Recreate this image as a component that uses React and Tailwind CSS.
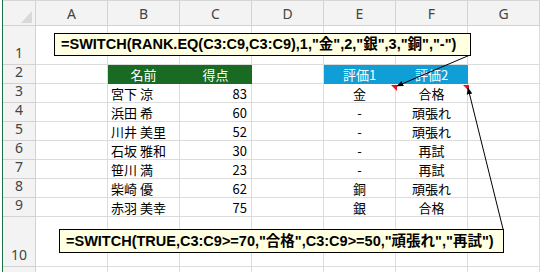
const COLS = ["A", "B", "C", "D", "E", "F", "G"];

const SCORES = [
  ["宮下 涼", 83, "金", "合格"],
  ["浜田 希", 60, "-", "頑張れ"],
  ["川井 美里", 52, "-", "頑張れ"],
  ["石坂 雅和", 30, "-", "再試"],
  ["笹川 満", 23, "-", "再試"],
  ["柴崎 優", 62, "銅", "頑張れ"],
  ["赤羽 美幸", 75, "銀", "合格"],
];

const cellFont = { fontFamily: '"Noto Sans CJK JP", "Noto Sans", sans-serif' };
const noteFont = { fontFamily: '"Liberation Sans", "Noto Sans CJK JP", sans-serif' };

function HeadCell({ children, className = "" }) {
  return (
    <div
      className={`flex items-end justify-center border-r border-b border-[#d2d2d2] bg-[#f3f3f3] text-[14px] leading-none text-[#444] pb-[4px] ${className}`}
      style={{ fontFamily: '"Noto Sans", "Liberation Sans", sans-serif' }}
    >
      {children}
    </div>
  );
}

// borders default to the sheet gridline colour unless a cell passes its own
function Cell({ children, className = "", edge = "border-[#dcdcdc]" }) {
  return (
    <div
      className={`flex items-center border-r border-b ${edge} text-[13px] leading-none text-black ${className}`}
      style={cellFont}
    >
      {children}
    </div>
  );
}

function Row({ num, cells, numClass = "" }) {
  return (
    <>
      <HeadCell className={numClass}>{num}</HeadCell>
      {cells}
    </>
  );
}

function emptyCells(n, key) {
  return Array.from({ length: n }, (_, i) => <Cell key={`${key}-${i}`} />);
}

export default function App() {
  return (
    <div className="relative w-[542px] h-[272px] overflow-hidden bg-white">
      <div className="flex h-full">
        {/* left window edge */}
        <div className="w-[3px] h-full flex">
          <div className="w-[2px]" />
          <div className="w-[1px] bg-[#1e7145]" />
        </div>

        <div className="flex flex-col">
          <div className="h-[2px] border-b border-[#d6d6d6]" />
          <div className="grid grid-cols-[33px_repeat(7,72px)] grid-rows-[25px_39px_repeat(8,19px)_50px_19px]">
            {/* corner + column letters */}
            <div className="relative border-r border-b border-[#d2d2d2] bg-[#f3f3f3]">
              <svg className="absolute right-[3px] bottom-[2px]" width="11" height="12" viewBox="0 0 11 12">
                <polygon points="11,0 11,12 0,12" fill="#d9d9d9" />
              </svg>
            </div>
            {COLS.map((c) => (
              <HeadCell key={c}>{c}</HeadCell>
            ))}

            {/* row 1 */}
            <Row num="1" numClass="pb-[2px]" cells={emptyCells(7, "r1")} />

            {/* row 2: table headings */}
            <Row
              num="2"
              cells={
                <>
                  <Cell />
                  <Cell className="justify-center bg-[#196b24] text-white" edge="border-[#196b24]">名前</Cell>
                  <Cell className="justify-center bg-[#196b24] text-white" edge="border-[#196b24]">得点</Cell>
                  <Cell />
                  <Cell className="justify-center bg-[#0f9ed5] text-white" edge="border-[#0f9ed5]">評価1</Cell>
                  <Cell className="justify-center bg-[#0f9ed5] text-white" edge="border-[#0f9ed5]">評価2</Cell>
                  <Cell />
                </>
              }
            />

            {SCORES.map(([name, score, rank, grade], i) => (
              <Row
                key={name}
                num={i + 3}
                cells={
                  <>
                    <Cell />
                    <Cell className="pl-[3px]">{name}</Cell>
                    <Cell className="justify-end pr-[4px]">{score}</Cell>
                    <Cell />
                    <Cell className="justify-center">{rank}</Cell>
                    <Cell className="justify-center">{grade}</Cell>
                    <Cell />
                  </>
                }
              />
            ))}

            <Row num="10" numClass="pb-[3px]" cells={emptyCells(7, "r10")} />
            {/* row 11 runs off the bottom edge */}
            <Row num="" cells={emptyCells(7, "r11")} />
          </div>
        </div>
      </div>

      {/* note indicators and leader lines */}
      <svg className="absolute inset-0 pointer-events-none" width="542" height="272">
        <defs>
          <marker id="head" viewBox="0 0 10 10" refX="9" refY="5" markerWidth="7" markerHeight="7" orient="auto-start-reverse">
            <path d="M0 1 L10 5 L0 9 z" fill="#000" />
          </marker>
        </defs>
        <polygon points="391,85 397,85 397,91" fill="#e81123" />
        <polygon points="463,85 469,85 469,91" fill="#e81123" />
        <line x1="470" y1="55" x2="397" y2="86" stroke="#000" strokeWidth="1" markerEnd="url(#head)" />
        <line x1="503" y1="229" x2="468" y2="88" stroke="#000" strokeWidth="1" markerEnd="url(#head)" />
      </svg>

      {/* formula notes */}
      <div
        className="absolute left-[54px] top-[33px] w-[417px] h-[23px] flex items-center pl-[6px] bg-[#ffffe1] border border-black text-[14.5px] font-bold text-black whitespace-nowrap leading-none"
        style={noteFont}
      >
        =SWITCH(RANK.EQ(C3:C9,C3:C9),1,"金",2,"銀",3,"銅","-")
      </div>
      <div
        className="absolute left-[59px] top-[229px] w-[445px] h-[24px] flex items-center pl-[6px] bg-[#ffffe1] border border-black text-[14.5px] font-bold text-black whitespace-nowrap leading-none"
        style={noteFont}
      >
        =SWITCH(TRUE,C3:C9&gt;=70,"合格",C3:C9&gt;=50,"頑張れ","再試")
      </div>
    </div>
  );
}
